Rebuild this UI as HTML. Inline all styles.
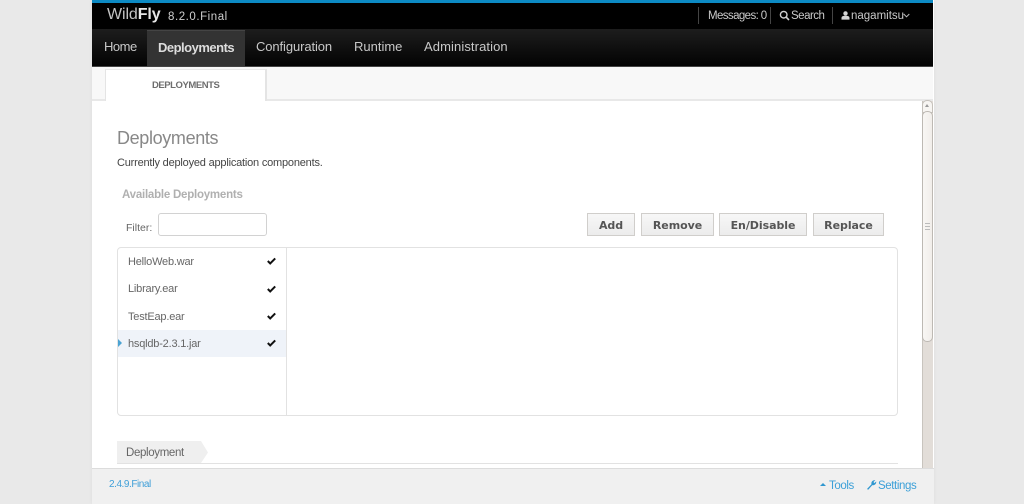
<!DOCTYPE html>
<html><head><meta charset="utf-8">
<style>
html,body{margin:0;padding:0;width:1024px;height:504px;overflow:hidden;background:#e9e9e9;font-family:"Liberation Sans",sans-serif;}
.a{position:absolute;white-space:nowrap;}
#page{position:absolute;left:92px;top:0;width:842px;height:504px;background:#fff;overflow:hidden;box-shadow:0 0 3px #ddd;}
.nav{color:#c8c8c8;font-size:13px;top:39px;line-height:15px;}
.top{color:#c9c9c9;font-size:11.5px;top:9px;line-height:14px;}
.sep{width:1px;background:#444;top:7px;height:17px;}
.btn{top:213px;height:21px;text-align:center;background:linear-gradient(#f7f7f7,#ececec);border:1px solid #d0cecb;color:#555;font:bold 11px/23px "DejaVu Sans",sans-serif;letter-spacing:-.05px;box-sizing:content-box;}
.item{left:36px;color:#666;font-size:11px;letter-spacing:-.2px;line-height:14px;}
.chk{left:175px;}
.foot{color:#3ca0d8;font-size:11.5px;line-height:14px;letter-spacing:-.4px;top:479px;}
</style></head><body>
<div id="page">
 <!-- top bars -->
 <div class="a" style="left:0;top:0;width:841px;height:3px;background:#0c8ac4"></div>
 <div class="a" style="left:0;top:3px;width:841px;height:26px;background:#000"></div>
 <div class="a" style="left:0;top:29px;width:841px;height:37px;background:linear-gradient(#1d1d1d,#030303)"></div>
 <div class="a" style="left:0;top:66px;width:841px;height:1px;background:#444"></div>
 <div class="a" style="left:15px;top:5px;color:#c4c4c4;font-size:16px;line-height:19px;letter-spacing:-.1px">Wild<b style="color:#e8e8e8;font-size:16px">Fly</b></div>
 <div class="a" style="left:76px;top:10px;color:#cfcfcf;font-size:11.5px;line-height:14px;letter-spacing:.55px">8.2.0.Final</div>
 <div class="a sep" style="left:606px"></div>
 <div class="a top" style="left:616px;letter-spacing:-.6px">Messages: 0</div>
 <div class="a sep" style="left:678px"></div>
 <svg class="a" style="left:687px;top:10px" width="11" height="11" viewBox="0 0 11 11"><circle cx="4.7" cy="4.7" r="3.3" fill="none" stroke="#cfcfcf" stroke-width="1.4"/><path d="M7.2 7.2L10 10" stroke="#cfcfcf" stroke-width="1.6"/></svg>
 <div class="a top" style="left:699px;top:9px;letter-spacing:-.5px">Search</div>
 <div class="a sep" style="left:740px"></div>
 <svg class="a" style="left:749px;top:11px" width="9" height="9" viewBox="0 0 9 9"><circle cx="4.5" cy="2.4" r="2.2" fill="#d5d5d5"/><path d="M.5 8.6V7C.5 5.4 2 4.8 4.5 4.8S8.5 5.400 8.500 7V8.600Z" fill="#d5d5d5"/></svg>
 <div class="a top" style="left:759px;top:9px">nagamitsu</div>
 <svg class="a" style="left:811px;top:13px" width="7" height="5" viewBox="0 0 7 5"><path d="M.7 1L3.500 3.800 6.300 1" fill="none" stroke="#bbb" stroke-width="1"/></svg>

 <!-- nav -->
 <div class="a" style="left:55px;top:30px;width:98px;height:36px;background:#333;border-top:1px solid #444;box-sizing:border-box"></div>
 <div class="a nav" style="left:12px;letter-spacing:-.5px">Home</div>
 <div class="a nav" style="left:66px;top:40px;color:#ddd;font-weight:bold;letter-spacing:-.5px">Deployments</div>
 <div class="a nav" style="left:164px;letter-spacing:-.1px">Configuration</div>
 <div class="a nav" style="left:262px;letter-spacing:0">Runtime</div>
 <div class="a nav" style="left:332px;letter-spacing:.1px">Administration</div>

 <!-- tab strip -->
 <div class="a" style="left:0;top:67px;width:841px;height:32px;background:#f8f8f8"></div>
 <div class="a" style="left:0;top:99px;width:841px;height:2px;background:#e8e8e8"></div>
 <div class="a" style="left:13px;top:69px;width:162px;height:32px;background:#fff;border-left:1px solid #e4e4e4;border-right:2px solid #e4e4e4;border-top:1px solid #e8e8e8;box-sizing:border-box"></div>
 <div class="a" style="left:60px;top:80px;color:#6e6e6e;font-size:9.500px;font-weight:bold;line-height:12px;letter-spacing:-.45px">DEPLOYMENTS</div>

 <!-- content -->
 <div class="a" style="left:25px;top:127px;color:#888;font-size:18px;line-height:22px;letter-spacing:-.35px">Deployments</div>
 <div class="a" style="left:25px;top:156px;color:#444;font-size:11px;line-height:14px;letter-spacing:-.2px">Currently deployed application components.</div>
 <div class="a" style="left:30px;top:188px;color:#b0b0b0;font-size:11.500px;font-weight:bold;line-height:14px;letter-spacing:-.23px">Available Deployments</div>
 <div class="a" style="left:34px;top:221px;color:#666;font-size:10.500px;line-height:14px">Filter:</div>
 <div class="a" style="left:66px;top:213px;width:109px;height:23px;box-sizing:border-box;border:1px solid #d2d2d2;border-radius:3px;background:#fff"></div>

 <div class="a btn" style="left:495px;width:46px">Add</div>
 <div class="a btn" style="left:549px;width:71px">Remove</div>
 <div class="a btn" style="left:627px;width:86px">En/Disable</div>
 <div class="a btn" style="left:721px;width:69px">Replace</div>

 <!-- panel -->
 <div class="a" style="left:25px;top:247px;width:781px;height:169px;box-sizing:border-box;border:1px solid #e2e2e2;border-radius:4px;background:#fff"></div>
 <div class="a" style="left:194px;top:248px;width:1px;height:167px;background:#e2e2e2"></div>
 <div class="a" style="left:26px;top:330px;width:168px;height:27px;background:#eff3f9"></div>
 <div class="a" style="left:26px;top:339px;width:0;height:0;border-left:4px solid #4ba3d3;border-top:4.500px solid transparent;border-bottom:4.500px solid transparent"></div>
 <div class="a item" style="top:255px">HelloWeb.war</div>
 <div class="a item" style="top:282px">Library.ear</div>
 <div class="a item" style="top:310px">TestEap.ear</div>
 <div class="a item" style="top:337px">hsqldb-2.3.1.jar</div>
 <svg class="a chk" style="top:257px" width="9" height="8" viewBox="0 0 9 8"><path d="M.8 4L3.200 6.400 8.200 1.400" fill="none" stroke="#111" stroke-width="2"/></svg>
 <svg class="a chk" style="top:285px" width="9" height="8" viewBox="0 0 9 8"><path d="M.8 4L3.200 6.400 8.200 1.400" fill="none" stroke="#111" stroke-width="2"/></svg>
 <svg class="a chk" style="top:312px" width="9" height="8" viewBox="0 0 9 8"><path d="M.8 4L3.200 6.400 8.200 1.400" fill="none" stroke="#111" stroke-width="2"/></svg>
 <svg class="a chk" style="top:339px" width="9" height="8" viewBox="0 0 9 8"><path d="M.8 4L3.200 6.400 8.200 1.400" fill="none" stroke="#111" stroke-width="2"/></svg>

 <!-- deployment tab -->
 <svg class="a" style="left:25px;top:441px" width="92" height="23" viewBox="0 0 92 23"><path d="M0 0H84L91 11.500 84 22H0Z" fill="#efefef"/></svg>
 <div class="a" style="left:25px;top:463px;width:781px;height:1px;background:#e2e2e2"></div>
 <div class="a" style="left:34px;top:446px;color:#666;font-size:11.500px;line-height:14px;letter-spacing:-.35px">Deployment</div>

 <!-- scrollbar -->
 <div class="a" style="left:830px;top:101px;width:11px;height:368px;background:#e2ddd8;border-left:1px solid #c8c4be;box-sizing:border-box"></div>
 <div class="a" style="left:830px;top:100px;width:11px;height:13px;background:#f7f5f2;border:1px solid #c5c1bb;border-radius:5px 5px 0 0;box-sizing:border-box"></div>
 <div class="a" style="left:833px;top:104px;width:0;height:0;border-left:2.500px solid transparent;border-right:2.500px solid transparent;border-bottom:3px solid #999"></div>
 <div class="a" style="left:830px;top:111px;width:11px;height:231px;background:linear-gradient(90deg,#f8f6f4,#f1eeea);border:1px solid #bdb9b3;border-radius:5px;box-sizing:border-box"></div>
 <div class="a" style="left:833px;top:223px;width:5px;height:7px;background:repeating-linear-gradient(#bbb 0 1px,transparent 1px 3px)"></div>

 <!-- footer -->
 <div class="a" style="left:0;top:468px;width:842px;height:36px;background:#f0f0f0;border-top:1px solid #dcdcdc;box-sizing:border-box"></div>
 <div class="a" style="left:17px;top:478px;color:#3f9fd8;font-size:10px;line-height:13px;letter-spacing:-.45px">2.4.9.Final</div>
 <div class="a" style="left:728px;top:483px;width:0;height:0;border-left:3.500px solid transparent;border-right:3.500px solid transparent;border-bottom:3.500px solid #2f97d0"></div>
 <div class="a foot" style="left:737px">Tools</div>
 <svg class="a" style="left:774px;top:479px" width="11" height="11" viewBox="0 0 11 11"><path d="M1 10L5.500 5.200C4.900 3 6.600 .8 9.300 1.100L7.500 3 8.300 4.100 10.200 2.500C10.500 4.900 8.400 6.700 6.300 6.100L2.200 10.800Z" fill="#2f97d0"/></svg>
 <div class="a foot" style="left:786px">Settings</div>
</div>
</body></html>
